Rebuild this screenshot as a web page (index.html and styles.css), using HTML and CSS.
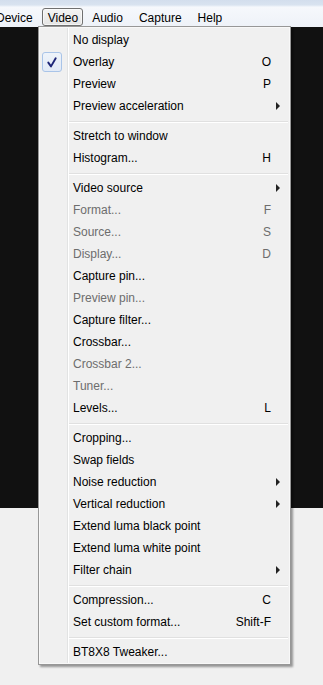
FILE: index.html
```html
<!DOCTYPE html>
<html>
<head>
<meta charset="utf-8">
<link rel="stylesheet" href="styles.css">
</head>
<body>
<div class="titlestrip"></div>
<div class="menubar">
  <span class="mb-item">Device</span>
  <span class="mb-item active">Video</span>
  <span class="mb-item">Audio</span>
  <span class="mb-item">Capture</span>
  <span class="mb-item">Help</span>
</div>
<div class="video-area"></div>
<div class="rest"></div>

<div class="menu">
  <div class="mi"><span class="ic"></span><span class="lbl">No display</span><span class="sc"></span><span class="ar"></span></div>
  <div class="mi"><span class="ic"><span class="checkbox"><svg width="18" height="18" viewBox="0 0 18 18"><path d="M5.3 9.6 L8 13.4 L12.7 5.2" fill="none" stroke="#1d2577" stroke-width="1.9" stroke-linecap="round" stroke-linejoin="round"/></svg></span></span><span class="lbl">Overlay</span><span class="sc">O</span><span class="ar"></span></div>
  <div class="mi"><span class="ic"></span><span class="lbl">Preview</span><span class="sc">P</span><span class="ar"></span></div>
  <div class="mi"><span class="ic"></span><span class="lbl">Preview acceleration</span><span class="sc"></span><span class="ar"><span class="tri"></span></span></div>
  <div class="sep"></div>
  <div class="mi"><span class="ic"></span><span class="lbl">Stretch to window</span><span class="sc"></span><span class="ar"></span></div>
  <div class="mi"><span class="ic"></span><span class="lbl">Histogram...</span><span class="sc">H</span><span class="ar"></span></div>
  <div class="sep"></div>
  <div class="mi"><span class="ic"></span><span class="lbl">Video source</span><span class="sc"></span><span class="ar"><span class="tri"></span></span></div>
  <div class="mi dis"><span class="ic"></span><span class="lbl">Format...</span><span class="sc">F</span><span class="ar"></span></div>
  <div class="mi dis"><span class="ic"></span><span class="lbl">Source...</span><span class="sc">S</span><span class="ar"></span></div>
  <div class="mi dis"><span class="ic"></span><span class="lbl">Display...</span><span class="sc">D</span><span class="ar"></span></div>
  <div class="mi"><span class="ic"></span><span class="lbl">Capture pin...</span><span class="sc"></span><span class="ar"></span></div>
  <div class="mi dis"><span class="ic"></span><span class="lbl">Preview pin...</span><span class="sc"></span><span class="ar"></span></div>
  <div class="mi"><span class="ic"></span><span class="lbl">Capture filter...</span><span class="sc"></span><span class="ar"></span></div>
  <div class="mi"><span class="ic"></span><span class="lbl">Crossbar...</span><span class="sc"></span><span class="ar"></span></div>
  <div class="mi dis"><span class="ic"></span><span class="lbl">Crossbar 2...</span><span class="sc"></span><span class="ar"></span></div>
  <div class="mi dis"><span class="ic"></span><span class="lbl">Tuner...</span><span class="sc"></span><span class="ar"></span></div>
  <div class="mi"><span class="ic"></span><span class="lbl">Levels...</span><span class="sc">L</span><span class="ar"></span></div>
  <div class="sep"></div>
  <div class="mi"><span class="ic"></span><span class="lbl">Cropping...</span><span class="sc"></span><span class="ar"></span></div>
  <div class="mi"><span class="ic"></span><span class="lbl">Swap fields</span><span class="sc"></span><span class="ar"></span></div>
  <div class="mi"><span class="ic"></span><span class="lbl">Noise reduction</span><span class="sc"></span><span class="ar"><span class="tri"></span></span></div>
  <div class="mi"><span class="ic"></span><span class="lbl">Vertical reduction</span><span class="sc"></span><span class="ar"><span class="tri"></span></span></div>
  <div class="mi"><span class="ic"></span><span class="lbl">Extend luma black point</span><span class="sc"></span><span class="ar"></span></div>
  <div class="mi"><span class="ic"></span><span class="lbl">Extend luma white point</span><span class="sc"></span><span class="ar"></span></div>
  <div class="mi"><span class="ic"></span><span class="lbl">Filter chain</span><span class="sc"></span><span class="ar"><span class="tri"></span></span></div>
  <div class="sep"></div>
  <div class="mi"><span class="ic"></span><span class="lbl">Compression...</span><span class="sc">C</span><span class="ar"></span></div>
  <div class="mi"><span class="ic"></span><span class="lbl">Set custom format...</span><span class="sc">Shift-F</span><span class="ar"></span></div>
  <div class="sep"></div>
  <div class="mi"><span class="ic"></span><span class="lbl">BT8X8 Tweaker...</span><span class="sc"></span><span class="ar"></span></div>
</div>
</body>
</html>
```

FILE: styles.css
```css
html, body {
  margin: 0;
  padding: 0;
}
body {
  width: 323px;
  height: 685px;
  overflow: hidden;
  background: #f0f0f0;
  font-family: "Liberation Sans", Arial, sans-serif;
  font-size: 12px;
  color: #000;
  position: relative;
}
.titlestrip {
  height: 7px;
  background: linear-gradient(to bottom, #d3deed 0, #d9e3f0 5px, #e9eff7 6px, #f3f6fb 7px);
}
.menubar {
  height: 20px;
  display: flex;
  align-items: center;
  gap: 2px;
  margin-left: -11px;
  background: linear-gradient(to bottom, #f6f8fc, #eef2f8);
  overflow: hidden;
}
.mb-item {
  height: 18px;
  line-height: 18px;
  padding: 0 6px;
  box-sizing: border-box;
  white-space: nowrap;
  border: 1px solid transparent;
  border-radius: 3px;
}
.mb-item.active {
  padding: 0 4px 0 5px;
  border-color: #707070;
  background: linear-gradient(to bottom, #f4f4f4, #e4e4e4);
  box-shadow: inset 0 0 0 1px rgba(255,255,255,0.6);
}
.video-area {
  height: 481px;
  background: #111111;
}
.rest {
  height: 177px;
  background: #f0f0f0;
}
.menu {
  position: absolute;
  left: 38px;
  top: 26px;
  width: 253px;
  box-sizing: border-box;
  border: 1px solid #979797;
  padding: 2px 0 1px 0;
  background:
    linear-gradient(to right, transparent 28px, #e2e3e3 28px, #e2e3e3 29px, #ffffff 29px, #ffffff 30px, transparent 30px),
    #f0f0f0;
  box-shadow: inset 0 0 0 1px #f8f8f8, 2px 2px 2px rgba(0,0,0,0.38);
}
.mi {
  display: grid;
  grid-template-columns: 34px 1fr auto 19px;
  align-items: center;
  height: 22px;
  line-height: 22px;
  white-space: nowrap;
}
.mi.dis {
  color: #6d6d6d;
}
.ic {
  height: 22px;
  display: flex;
  align-items: center;
}
.checkbox {
  margin-left: 3px;
  width: 20px;
  height: 20px;
  box-sizing: border-box;
  border: 1px solid #a9c4e8;
  border-radius: 3px;
  background: linear-gradient(to bottom, #eef3fa, #e2eaf6);
  display: flex;
  align-items: center;
  justify-content: center;
}
.checkbox svg {
  display: block;
}
.sc {
  text-align: right;
}
.ar {
  height: 22px;
  display: flex;
  align-items: center;
}
.tri {
  margin-left: 5px;
  width: 0;
  height: 0;
  border-left: 4px solid #222;
  border-top: 4px solid transparent;
  border-bottom: 4px solid transparent;
}
.sep {
  height: 8px;
  margin: 0 2px 0 30px;
  background: linear-gradient(to bottom, transparent 4px, #e0e0e0 4px, #e0e0e0 5px, #ffffff 5px, #ffffff 6px, transparent 6px);
}
```
